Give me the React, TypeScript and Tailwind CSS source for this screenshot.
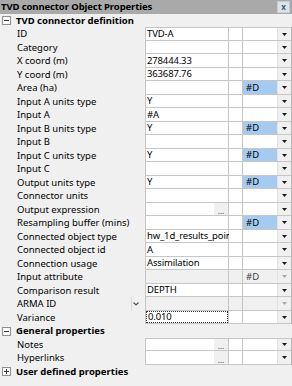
import React from "react";

type Row =
  | { kind: "section"; label: string; open: boolean }
  | {
      kind: "prop";
      label: string;
      value?: string;
      code?: string;
      blue?: boolean;
      dots?: boolean;
      disabled?: boolean;
      readonly?: boolean;
      focus?: boolean;
      first?: boolean;
    };

const rows: Row[] = [
  { kind: "section", label: "TVD connector definition", open: true },
  { kind: "prop", label: "ID", value: "TVD-A", first: true },
  { kind: "prop", label: "Category" },
  { kind: "prop", label: "X coord (m)", value: "278444.33" },
  { kind: "prop", label: "Y coord (m)", value: "363687.76" },
  { kind: "prop", label: "Area (ha)", code: "#D", blue: true },
  { kind: "prop", label: "Input A units type", value: "Y" },
  { kind: "prop", label: "Input A", value: "#A" },
  { kind: "prop", label: "Input B units type", value: "Y", code: "#D", blue: true },
  { kind: "prop", label: "Input B" },
  { kind: "prop", label: "Input C units type", value: "Y", code: "#D", blue: true },
  { kind: "prop", label: "Input C" },
  { kind: "prop", label: "Output units type", value: "Y", code: "#D", blue: true },
  { kind: "prop", label: "Connector units" },
  { kind: "prop", label: "Output expression", dots: true },
  { kind: "prop", label: "Resampling buffer (mins)", code: "#D", blue: true },
  { kind: "prop", label: "Connected object type", value: "hw_1d_results_poin" },
  { kind: "prop", label: "Connected object id", value: "A" },
  { kind: "prop", label: "Connection usage", value: "Assimilation" },
  { kind: "prop", label: "Input attribute", code: "#D", readonly: true },
  { kind: "prop", label: "Comparison result", value: "DEPTH" },
  { kind: "prop", label: "ARMA ID", disabled: true },
  { kind: "prop", label: "Variance", value: "0.010", focus: true },
  { kind: "section", label: "General properties", open: true },
  { kind: "prop", label: "Notes", dots: true, first: true },
  { kind: "prop", label: "Hyperlinks", dots: true },
  { kind: "section", label: "User defined properties", open: false },
];

function Arrow({ faded }: { faded?: boolean }) {
  return (
    <svg width="5" height="3" viewBox="0 0 5 3">
      <path d="M0 0h5L2.5 3z" fill={faded ? "#a8a8a8" : "#1a1a1a"} />
    </svg>
  );
}

function ExpandBox({ open }: { open: boolean }) {
  return (
    <svg width="9" height="9" viewBox="0 0 9 9" className="shrink-0">
      <rect x="0.5" y="0.5" width="8" height="8" fill="#fafafa" stroke="#8f8f8f" />
      <path d="M2 4.5h5" stroke="#3c3c3c" />
      {!open && <path d="M4.5 2v5" stroke="#3c3c3c" />}
    </svg>
  );
}

function PropRow({ row, h }: { row: Extract<Row, { kind: "prop" }>; h: string }) {
  const gray = row.disabled || row.readonly;
  return (
    <div className={`flex ${h}`}>
      <div className="w-[146px] shrink-0 flex items-center pl-[17px] border-r border-[#c6c6c6] relative whitespace-nowrap">
        {row.label}
        {row.disabled && (
          <div className="absolute left-[131px] top-0 bottom-0 flex items-center border-l border-[#d8d8d8] pl-[1px]">
            <svg width="6" height="4" viewBox="0 0 6 4">
              <path d="M0.5 0.5l2.5 2.5l2.5-2.5" stroke="#555" strokeWidth="1.2" fill="none" />
            </svg>
          </div>
        )}
      </div>
      <div className={`flex flex-1 border-b border-[#c6c6c6] ${row.first ? "border-t" : ""}`}>
        <div
          className={`w-[83px] shrink-0 flex border-r border-[#c6c6c6] ${
            gray ? "bg-[#f0f0f0]" : "bg-white"
          }`}
        >
          <div
            className={`flex-1 min-w-0 flex items-center pl-[1px] whitespace-nowrap tracking-[-0.15px] ${
              row.focus ? "border border-dotted border-[#333]" : ""
            }`}
          >
            {row.value}
          </div>
          {row.dots && (
            <div className="w-[14px] shrink-0 bg-[#f0f0f0] flex items-end justify-center text-[8px] leading-[9px] text-[#444]">
              ...
            </div>
          )}
        </div>
        <div
          className={`w-[14px] shrink-0 border-r border-[#c6c6c6] ${gray ? "bg-[#f0f0f0]" : "bg-white"}`}
        />
        <div
          className={`w-[34px] shrink-0 flex items-center pl-[3px] ${
            row.blue ? "bg-[#a6cbf0]" : gray ? "bg-[#f0f0f0]" : "bg-white"
          } ${row.readonly ? "text-[#404040]" : ""}`}
        >
          {row.code}
        </div>
        <div className="w-[14px] shrink-0 flex items-center justify-center bg-[#f0f0f0] border-l border-[#e2e2e2]">
          <Arrow faded={gray} />
        </div>
      </div>
      <div className="w-px shrink-0 bg-[#b8b8b8]" />
    </div>
  );
}

export default function App() {
  return (
    <div
      className="w-[292px] h-[386px] overflow-hidden bg-[#f0f0f0] text-black text-[9.5px] leading-[12px]"
      style={{ fontFamily: '"Noto Sans", "Open Sans", sans-serif' }}
    >
      {/* Title bar */}
      <div className="h-[14px] flex items-center justify-between bg-[#a9a9a9] pl-[1px] pr-[2px]">
        <span className="font-bold text-[9.5px] tracking-[-0.1px]">TVD connector Object Properties</span>
        <div className="w-[13px] h-[12px] flex items-center justify-center bg-[#dde3ea] border border-[#c4ccd6] text-[#4c5b6e] text-[8px] font-bold">
          x
        </div>
      </div>

      {rows.map((row, i) => {
        const h = i % 2 === 0 ? "h-[13px]" : "h-[14px]";
        if (row.kind === "section") {
          return (
            <div key={row.label} className={`flex items-center gap-[5px] pl-[2px] ${h}`}>
              <ExpandBox open={row.open} />
              <span className="font-bold text-[9.5px]">{row.label}</span>
            </div>
          );
        }
        return <PropRow key={row.label} row={row} h={h} />;
      })}
    </div>
  );
}
